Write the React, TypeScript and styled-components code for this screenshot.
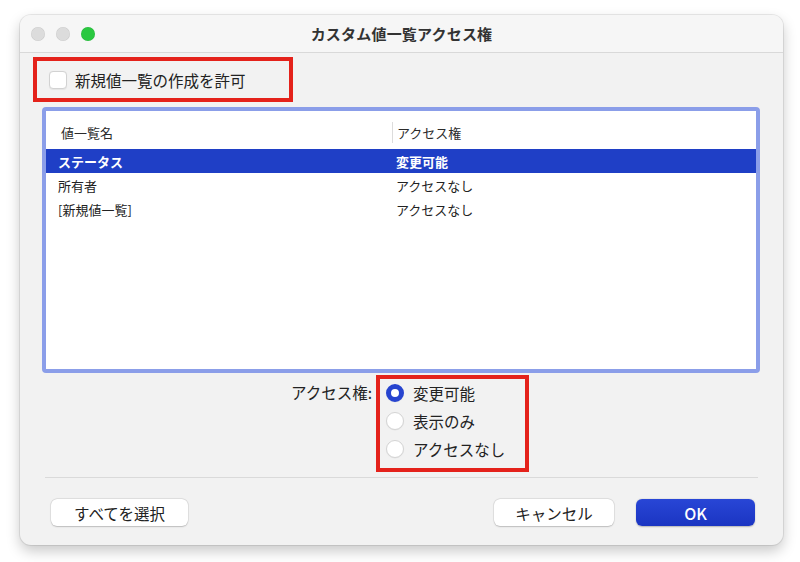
import React, { useState } from 'react';
import styled, { createGlobalStyle } from 'styled-components';

const GlobalStyle = createGlobalStyle`
  html, body {
    margin: 0;
    padding: 0;
    background: #ffffff;
  }
  body {
    font-family: "Noto Sans CJK JP", "Noto Sans", "Liberation Sans", sans-serif;
    color: #262626;
  }
`;

const annotationRed = '#e4221b';

const Page = styled.div`
  width: 800px;
  height: 562px;
  padding: 15px 0 0 20px;
  box-sizing: border-box;
`;

const Window = styled.div`
  width: 763px;
  height: 530px;
  background: #f2f2f2;
  border-radius: 11px;
  box-shadow: 0 0 0 1px rgba(0, 0, 0, 0.08), 0 6px 14px rgba(0, 0, 0, 0.22);
  display: flex;
  flex-direction: column;
  overflow: hidden;
`;

const TitleBar = styled.div`
  height: 37px;
  flex-shrink: 0;
  display: grid;
  grid-template-columns: 100px 1fr 100px;
  align-items: center;
  background: #f6f6f6;
  border-bottom: 1px solid #d9d9d9;
`;

const Lights = styled.div`
  display: flex;
  gap: 11px;
  padding-left: 11px;
`;

const Light = styled.span<{ $color: string }>`
  width: 14px;
  height: 14px;
  border-radius: 50%;
  background: ${(p) => p.$color};
  box-shadow: inset 0 0 0 0.5px rgba(0, 0, 0, 0.08);
`;

const Title = styled.div`
  text-align: center;
  font-size: 15px;
  font-weight: 700;
  color: #333;
  letter-spacing: 0.2px;
`;

// red call-out frames around the controls
const Callout = styled.div`
  border: 4px solid ${annotationRed};
  box-sizing: border-box;
`;

const CheckCallout = styled(Callout)`
  width: 260px;
  height: 45px;
  margin: 4px 0 0 13px;
  display: flex;
  align-items: center;
  padding-left: 12px;
  gap: 8px;
`;

const CheckBox = styled.span`
  width: 16px;
  height: 16px;
  border-radius: 4px;
  background: #fff;
  border: 1px solid #d2d2d2;
  box-shadow: 0 0.5px 1px rgba(0, 0, 0, 0.06);
`;

const CheckLabel = styled.span`
  font-size: 15.5px;
  color: #222;
`;

const TableFrame = styled.div`
  margin: 5px 23px 0 22px;
  height: 266px;
  box-sizing: border-box;
  border: 4px solid #8b9ee9;
  border-radius: 4px;
  background: #fff;
  display: flex;
  flex-direction: column;
  padding-top: 2px;
`;

const Columns = styled.div`
  display: grid;
  grid-template-columns: 346px 1fr;
  font-size: 13px;
`;

const HeaderRow = styled(Columns)`
  height: 36px;
  align-items: center;
  color: #2b2b2b;
`;

const HeaderCell = styled.div<{ $divider?: boolean }>`
  padding-left: ${(p) => (p.$divider ? '4px' : '15px')};
  border-left: ${(p) => (p.$divider ? '1px solid #dcdcdc' : 'none')};
  line-height: 21px;
  margin-top: 3px;
`;

const Row = styled(Columns)<{ $selected?: boolean }>`
  height: 24px;
  align-items: center;
  background: ${(p) => (p.$selected ? '#1f3fc6' : 'transparent')};
  color: ${(p) => (p.$selected ? '#fff' : '#222')};
  font-weight: ${(p) => (p.$selected ? 700 : 400)};
`;

const Cell = styled.div<{ $second?: boolean }>`
  padding-left: ${(p) => (p.$second ? '4px' : '12px')};
`;

const AccessArea = styled.div`
  display: flex;
  margin-top: 2px;
`;

const AccessLabel = styled.div`
  flex: 0 0 356px;
  box-sizing: border-box;
  text-align: right;
  padding: 6px 4px 0 0;
  font-size: 15.5px;
  color: #222;
`;

const RadioCallout = styled(Callout)`
  width: 153px;
  height: 97px;
  padding: 0 0 5px 6px;
  display: flex;
  flex-direction: column;
`;

const RadioRow = styled.label`
  height: 28px;
  display: flex;
  align-items: center;
  gap: 9px;
  font-size: 15.5px;
  color: #222;
  cursor: default;
`;

const RadioDot = styled.span<{ $on: boolean }>`
  width: 18px;
  height: 18px;
  box-sizing: border-box;
  border-radius: 50%;
  flex-shrink: 0;
  background: #ffffff;
  border: ${(p) => (p.$on ? '5.5px solid #2744cf' : '1px solid #d4d4d4')};
  box-shadow: 0 0.5px 1px rgba(0, 0, 0, 0.06);
`;

const Separator = styled.div`
  height: 1px;
  background: #dadada;
  margin: 5px 25px 0 25px;
`;

const ButtonBar = styled.div`
  display: flex;
  align-items: center;
  margin-top: 21px;
  padding: 0 28px 0 31px;
  gap: 22px;
`;

const Spacer = styled.div`
  flex: 1;
`;

const Button = styled.button<{ $width: number; $primary?: boolean }>`
  width: ${(p) => p.$width}px;
  height: 27px;
  border-radius: 6px;
  border: none;
  font-family: inherit;
  font-size: ${(p) => (p.$primary ? '16px' : '15.5px')};
  font-weight: ${(p) => (p.$primary ? 500 : 400)};
  color: ${(p) => (p.$primary ? '#fff' : '#222')};
  background: ${(p) =>
    p.$primary ? 'linear-gradient(#2846d6, #1b35c2)' : '#ffffff'};
  box-shadow: ${(p) =>
    p.$primary
      ? '0 0.5px 1.5px rgba(0, 0, 0, 0.25)'
      : '0 0 0 0.5px rgba(0, 0, 0, 0.1), 0 0.5px 1.5px rgba(0, 0, 0, 0.18)'};
  padding: 0;
`;

const lists = [
  { name: 'ステータス', access: '変更可能' },
  { name: '所有者', access: 'アクセスなし' },
  { name: '[新規値一覧]', access: 'アクセスなし' },
];

const levels = ['変更可能', '表示のみ', 'アクセスなし'];

export default function App() {
  const [level, setLevel] = useState(0);
  return (
    <Page>
      <GlobalStyle />
      <Window>
        <TitleBar>
          <Lights>
            <Light $color="#dcdcdc" />
            <Light $color="#dcdcdc" />
            <Light $color="#2ac840" />
          </Lights>
          <Title>カスタム値一覧アクセス権</Title>
          <div />
        </TitleBar>

        <CheckCallout>
          <CheckBox />
          <CheckLabel>新規値一覧の作成を許可</CheckLabel>
        </CheckCallout>

        <TableFrame>
          <HeaderRow>
            <HeaderCell>値一覧名</HeaderCell>
            <HeaderCell $divider>アクセス権</HeaderCell>
          </HeaderRow>
          {lists.map((l, i) => (
            <Row key={l.name} $selected={i === 0}>
              <Cell>{l.name}</Cell>
              <Cell $second>{l.access}</Cell>
            </Row>
          ))}
        </TableFrame>

        <AccessArea>
          <AccessLabel>アクセス権:</AccessLabel>
          <RadioCallout>
            {levels.map((t, i) => (
              <RadioRow key={t} onClick={() => setLevel(i)}>
                <RadioDot $on={level === i} />
                {t}
              </RadioRow>
            ))}
          </RadioCallout>
        </AccessArea>

        <Separator />

        <ButtonBar>
          <Button $width={137}>すべてを選択</Button>
          <Spacer />
          <Button $width={120}>キャンセル</Button>
          <Button $width={119} $primary>
            OK
          </Button>
        </ButtonBar>
      </Window>
    </Page>
  );
}
